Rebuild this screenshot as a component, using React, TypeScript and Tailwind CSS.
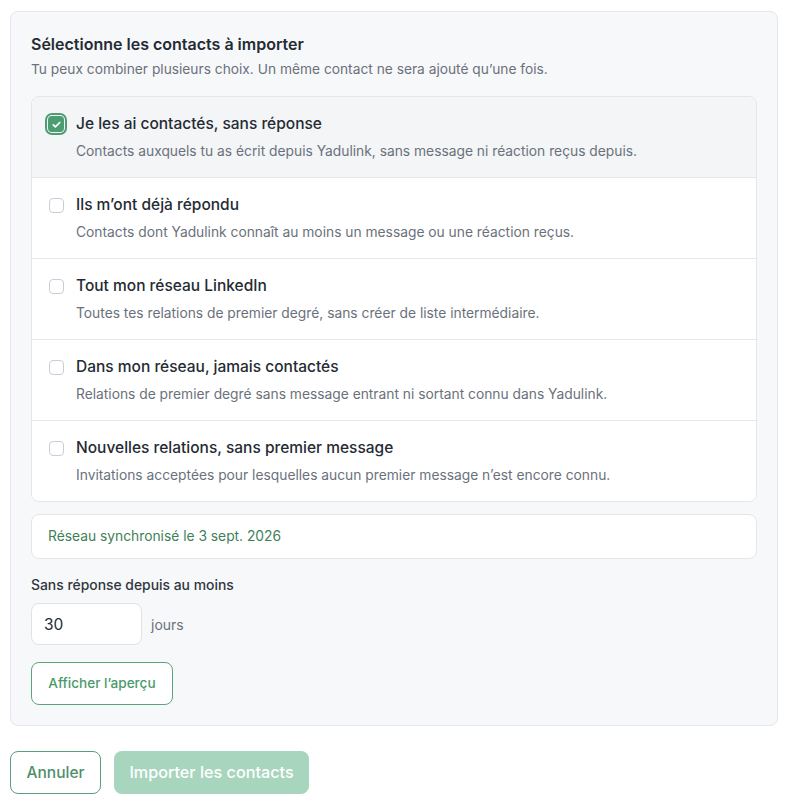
import { useState } from "react"

const options = [
  {
    id: "no-reply",
    title: "Je les ai contactés, sans réponse",
    desc: "Contacts auxquels tu as écrit depuis Yadulink, sans message ni réaction reçus depuis.",
  },
  {
    id: "replied",
    title: "Ils m’ont déjà répondu",
    desc: "Contacts dont Yadulink connaît au moins un message ou une réaction reçus.",
  },
  {
    id: "network",
    title: "Tout mon réseau LinkedIn",
    desc: "Toutes tes relations de premier degré, sans créer de liste intermédiaire.",
  },
  {
    id: "never",
    title: "Dans mon réseau, jamais contactés",
    desc: "Relations de premier degré sans message entrant ni sortant connu dans Yadulink.",
  },
  {
    id: "new",
    title: "Nouvelles relations, sans premier message",
    desc: "Invitations acceptées pour lesquelles aucun premier message n’est encore connu.",
  },
]

function Checkbox({ checked }: { checked: boolean }) {
  if (checked) {
    return (
      <span className="flex h-4 w-4 shrink-0 items-center justify-center rounded-[4px] bg-[#4e9d72] ring-2 ring-[#4e9d72] ring-offset-1 ring-offset-[#f3f5f7]">
        <svg viewBox="0 0 16 16" className="h-[13px] w-[13px]" fill="none" stroke="white" strokeWidth="2" strokeLinecap="round" strokeLinejoin="round">
          <path d="M4 8.5l2.6 2.5L12 5.5" />
        </svg>
      </span>
    )
  }
  return <span className="block h-[15px] w-[15px] shrink-0 rounded-[4px] border border-[#c9ced6] bg-white" />
}

export default function App() {
  const [selected, setSelected] = useState<string[]>(["no-reply"])
  const [days, setDays] = useState("30")

  const toggle = (id: string) =>
    setSelected((s) => (s.includes(id) ? s.filter((x) => x !== id) : [...s, id]))

  return (
    <div className="min-h-[804px] bg-white px-[10px] pt-[11px] font-['Inter','Noto_Sans',sans-serif] text-[#1f2937]">
      <div className="rounded-[8px] border border-[#e3e6ea] bg-[#f7f8fa] px-5 pb-[20px] pt-[21px]">
        <h2 className="text-[16px] font-semibold leading-[22px] text-[#252b33]">Sélectionne les contacts à importer</h2>
        <p className="mt-[5px] text-[13.75px] leading-[18px] text-[#6b717b]">
          Tu peux combiner plusieurs choix. Un même contact ne sera ajouté qu’une fois.
        </p>

        <div className="mt-[18px] overflow-hidden rounded-[8px] border border-[#e3e6ea] bg-white">
          {options.map((o, i) => {
            const on = selected.includes(o.id)
            return (
              <button
                key={o.id}
                onClick={() => toggle(o.id)}
                className={`flex w-full gap-[11px] px-[15px] py-4 text-left ${i > 0 ? "border-t border-[#e3e6ea]" : ""} ${on ? "bg-[#f3f5f7]" : "bg-white"}`}
              >
                <div className="flex h-[22px] w-[18px] shrink-0 items-center justify-center">
                  <Checkbox checked={on} />
                </div>
                <div>
                  <div className="text-[15.5px] font-medium leading-[22px] text-[#252b33]">{o.title}</div>
                  <div className="mt-[6px] text-[13.8px] leading-[20px] text-[#6b717b]">{o.desc}</div>
                </div>
              </button>
            )
          })}
        </div>

        <div className="mt-[12px] rounded-[8px] border border-[#e3e6ea] bg-white px-4 py-[12px] text-[13.8px] leading-[19px] text-[#3f7f58]">
          Réseau synchronisé le 3 sept. 2026
        </div>

        <label className="mt-[17px] block text-[13.9px] font-medium leading-[18px] text-[#30363e]">
          Sans réponse depuis au moins
        </label>
        <div className="mt-[9px] flex items-center gap-[9px]">
          <input
            value={days}
            onChange={(e) => setDays(e.target.value)}
            className="h-[42px] w-[111px] rounded-[8px] border border-[#dfe2e6] bg-white px-3 text-[15.5px] text-[#252b33] outline-none"
          />
          <span className="text-[14px] text-[#6b717b]">jours</span>
        </div>

        <button className="mt-[17px] h-[43px] w-[142px] rounded-[8px] border border-[#5aa57b] bg-white text-[13.6px] font-medium text-[#4a9a6c]">
          Afficher l’aperçu
        </button>
      </div>

      <div className="mt-[25px] flex gap-[13px]">
        <button className="h-[43px] w-[91px] rounded-[8px] border border-[#5a9e7a] bg-white text-[15.5px] font-medium text-[#4f8f6c]">
          Annuler
        </button>
        <button disabled className="h-[43px] w-[195px] rounded-[8px] bg-[#a8d5bd] text-[16.2px] font-medium text-white">
          Importer les contacts
        </button>
      </div>
    </div>
  )
}
